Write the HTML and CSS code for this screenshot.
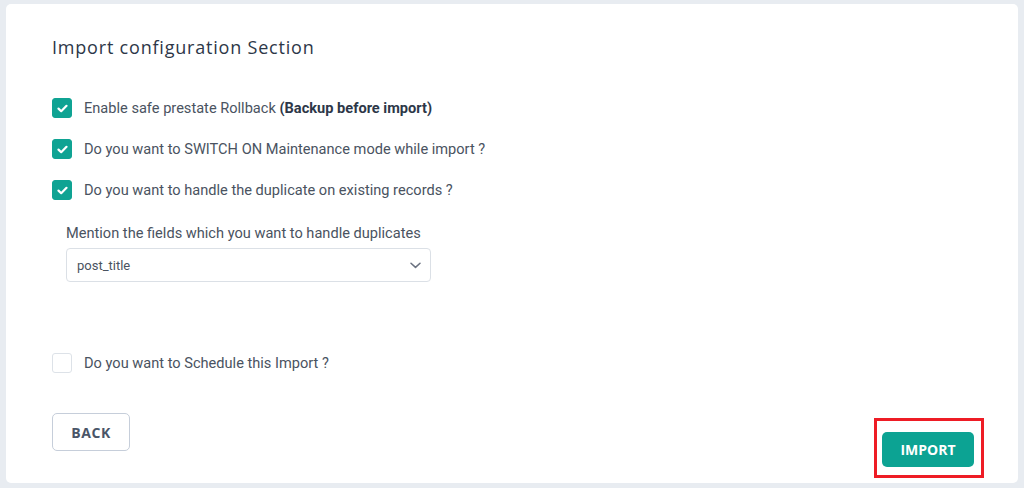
FILE: index.html
```html
<!DOCTYPE html>
<html lang="en">
<head>
    <meta charset="UTF-8">
    <meta name="viewport" content="width=device-width, initial-scale=1.0">
    <title>Import configuration</title>
    <link rel="stylesheet" href="styles.css">
</head>
<body>
    <div class="card">
        <h2 class="section-title">Import configuration Section</h2>

        <div class="options">
            <label class="option">
                <span class="check checked">
                    <svg width="11" height="9" viewBox="0 0 11 9"><path d="M1.5 4.6 L4.2 7.2 L9.5 1.8" fill="none" stroke="#fff" stroke-width="2.2" stroke-linecap="round" stroke-linejoin="round"/></svg>
                </span>
                <span>Enable safe prestate Rollback <b>(Backup before import)</b></span>
            </label>
            <label class="option">
                <span class="check checked">
                    <svg width="11" height="9" viewBox="0 0 11 9"><path d="M1.5 4.6 L4.2 7.2 L9.5 1.8" fill="none" stroke="#fff" stroke-width="2.2" stroke-linecap="round" stroke-linejoin="round"/></svg>
                </span>
                <span>Do you want to SWITCH ON Maintenance mode while import ?</span>
            </label>
            <label class="option">
                <span class="check checked">
                    <svg width="11" height="9" viewBox="0 0 11 9"><path d="M1.5 4.6 L4.2 7.2 L9.5 1.8" fill="none" stroke="#fff" stroke-width="2.2" stroke-linecap="round" stroke-linejoin="round"/></svg>
                </span>
                <span>Do you want to handle the duplicate on existing records ?</span>
            </label>
        </div>

        <div class="duplicates">
            <div class="field-label">Mention the fields which you want to handle duplicates</div>
            <div class="select">
                <span>post_title</span>
                <svg width="11" height="7" viewBox="0 0 11 7"><path d="M1 1.2 L5.5 5.4 L10 1.2" fill="none" stroke="#6b7280" stroke-width="1.5" stroke-linecap="round" stroke-linejoin="round"/></svg>
            </div>
        </div>

        <label class="option schedule">
            <span class="check"></span>
            <span>Do you want to Schedule this Import ?</span>
        </label>

        <div class="actions">
            <button class="btn btn-back">BACK</button>
            <div class="highlight">
                <button class="btn btn-import">IMPORT</button>
            </div>
        </div>
    </div>
</body>
</html>
```

FILE: styles.css
```css
body {
    margin: 0;
    background-color: #e8ecf1;
    font-family: Roboto, 'Liberation Sans', sans-serif;
}
.card {
    background-color: white;
    border-radius: 5px;
    margin: 4px 6px 5px 6px;
    height: 479px;
    box-sizing: border-box;
    padding: 31px 34px 0 46px;
}
.section-title {
    margin: 0;
    font-family: 'Open Sans', sans-serif;
    font-size: 18px;
    font-weight: 500;
    line-height: 24px;
    letter-spacing: 0.8px;
    color: #2d3748;
}
.options {
    margin-top: 39px;
    display: flex;
    flex-direction: column;
    gap: 21px;
}
.option {
    display: flex;
    align-items: center;
    gap: 12px;
    font-size: 14.6px;
    line-height: 20px;
    color: #4a5361;
}
.option b {
    color: #2d3748;
}
.check {
    width: 20px;
    height: 20px;
    box-sizing: border-box;
    border-radius: 3px;
    border: 1px solid #dde2e8;
    display: flex;
    align-items: center;
    justify-content: center;
    flex-shrink: 0;
}
.check.checked {
    background-color: #0fa393;
    border-color: #0fa393;
}
.duplicates {
    margin-top: 23px;
    padding-left: 14px;
}
.field-label {
    font-size: 14.6px;
    line-height: 20px;
    color: #4a5361;
}
.select {
    margin-top: 5px;
    width: 365px;
    height: 34px;
    box-sizing: border-box;
    border: 1px solid #dbe0e6;
    border-radius: 4px;
    display: flex;
    align-items: center;
    justify-content: space-between;
    padding: 0 9px 0 10px;
    font-size: 13px;
    color: #4a5361;
}
.schedule {
    margin-top: 71px;
}
.actions {
    margin-top: 40px;
    display: flex;
    justify-content: space-between;
    align-items: flex-start;
}
.btn {
    font-family: 'Open Sans', sans-serif;
    font-weight: 700;
    font-size: 14px;
    border-radius: 5px;
    cursor: pointer;
}
.btn-back {
    width: 78px;
    height: 38px;
    background-color: white;
    border: 1px solid #c6ceda;
    color: #4a5568;
    letter-spacing: 0.6px;
}
.highlight {
    margin-top: 5px;
    border: 3px solid #ee1c25;
    padding: 11px 7px 8px 5px;
}
.btn-import {
    display: block;
    width: 92px;
    height: 35px;
    background-color: #0ca393;
    border: none;
    color: white;
}
```
